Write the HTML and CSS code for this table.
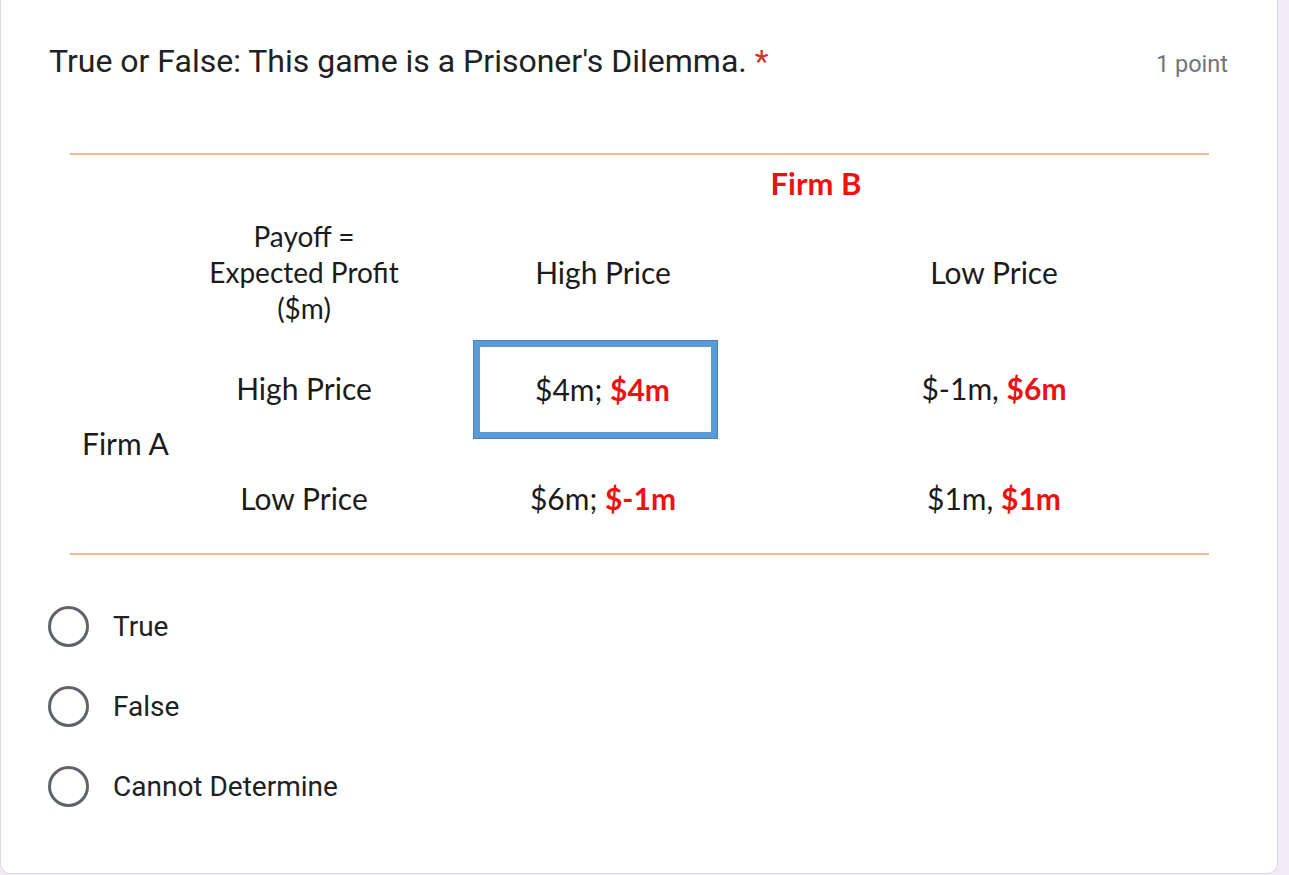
FILE: index.html
```html
<!DOCTYPE html>
<html>
<head>
<meta charset="utf-8">
<link rel="stylesheet" href="styles.css">
</head>
<body>
<div class="card">
  <div class="head">
    <div class="title">True or False: This game is a Prisoner's Dilemma. <span class="req">*</span></div>
    <div class="points">1 point</div>
  </div>
  <div class="figure">
    <div class="rule"></div>
    <div class="grid">
      <div class="c firmb">Firm B</div>
      <div class="c payoff"><span>Payoff =<br>Expected Profit<br>($m)</span></div>
      <div class="c colh c2">High Price</div>
      <div class="c colh c3">Low Price</div>
      <div class="c firma">Firm A</div>
      <div class="c rowh r1">High Price</div>
      <div class="c cell r1 c2"><div class="box"><span>$4m; <b>$4m</b></span></div></div>
      <div class="c cell r1 c3"><span>$-1m, <b>$6m</b></span></div>
      <div class="c rowh r2">Low Price</div>
      <div class="c cell r2 c2"><span>$6m; <b>$-1m</b></span></div>
      <div class="c cell r2 c3"><span>$1m, <b>$1m</b></span></div>
    </div>
    <div class="rule"></div>
  </div>
  <div class="options">
    <div class="opt"><span class="radio"></span><span class="lbl">True</span></div>
    <div class="opt"><span class="radio"></span><span class="lbl">False</span></div>
    <div class="opt"><span class="radio"></span><span class="lbl">Cannot Determine</span></div>
  </div>
</div>
</body>
</html>
```
FILE: styles.css
```css
html, body {
  margin: 0;
  padding: 0;
  background: #f0ebf8;
}
body {
  width: 1289px;
  height: 875px;
  overflow: hidden;
}
.card {
  box-sizing: border-box;
  width: 1278px;
  height: 874px;
  background: #fff;
  border: 1px solid #dadce0;
  border-top: none;
  border-radius: 0 0 10px 10px;
  padding: 42px 49px 0 47px;
}
.head {
  display: flex;
  justify-content: space-between;
  align-items: baseline;
}
.title {
  font-family: Roboto, "Liberation Sans", sans-serif;
  font-size: 32px;
  color: #202124;
  margin-left: 1px;
}
.req {
  color: #d93025;
  margin-left: 0;
}
.points {
  font-family: Roboto, "Liberation Sans", sans-serif;
  font-size: 23.5px;
  color: #70757a;
}
.figure {
  margin-top: 73px;
  padding: 0 20px 0 22px;
  width: 1181px;
  box-sizing: border-box;
  font-family: Lato, "Open Sans", sans-serif;
  color: #1b1b1b;
}
.rule {
  height: 2px;
  background: #f5b78e;
}
.grid {
  display: grid;
  grid-template-columns: 121px 226px 372px 1fr;
  grid-template-rows: 56px 122px 110px 110px;
  font-size: 30px;
}
.c {
  display: flex;
  align-items: center;
  justify-content: center;
  text-align: center;
}
.firmb {
  grid-column: 3 / 5;
  grid-row: 1;
  color: #ee1111;
  font-weight: bold;
  font-size: 31px;
  padding-left: 6px;
}
.payoff {
  grid-column: 2;
  grid-row: 2;
  font-size: 28px;
  line-height: 36px;
}
.colh { grid-row: 2; }
.c2 { grid-column: 3; }
.c3 { grid-column: 4; padding-right: 10px; }
.firma {
  grid-column: 1;
  grid-row: 3 / 5;
  justify-content: flex-start;
  padding-left: 12px;
  font-size: 30px;
}
.rowh { grid-column: 2; }
.r1 { grid-row: 3; }
.r2 { grid-row: 4; }
.cell b {
  color: #ee1111;
  font-weight: bold;
}
.box {
  box-sizing: border-box;
  width: 243px;
  height: 97px;
  border: 6px solid #5b9bd5;
  box-shadow: 0 0 0 1px #4a82bd;
  display: flex;
  align-items: center;
  justify-content: center;
  padding-left: 14px;
  margin-right: 15px;
  margin-top: 2px;
}
.options {
  margin-top: 31px;
  display: flex;
  flex-direction: column;
}
.opt {
  height: 80px;
  display: flex;
  align-items: center;
}
.radio {
  box-sizing: border-box;
  width: 41px;
  height: 41px;
  border: 3.5px solid #5f6368;
  border-radius: 50%;
  margin-right: 24px;
}
.lbl {
  font-family: Roboto, "Liberation Sans", sans-serif;
  font-size: 28px;
  color: #202124;
}
```
